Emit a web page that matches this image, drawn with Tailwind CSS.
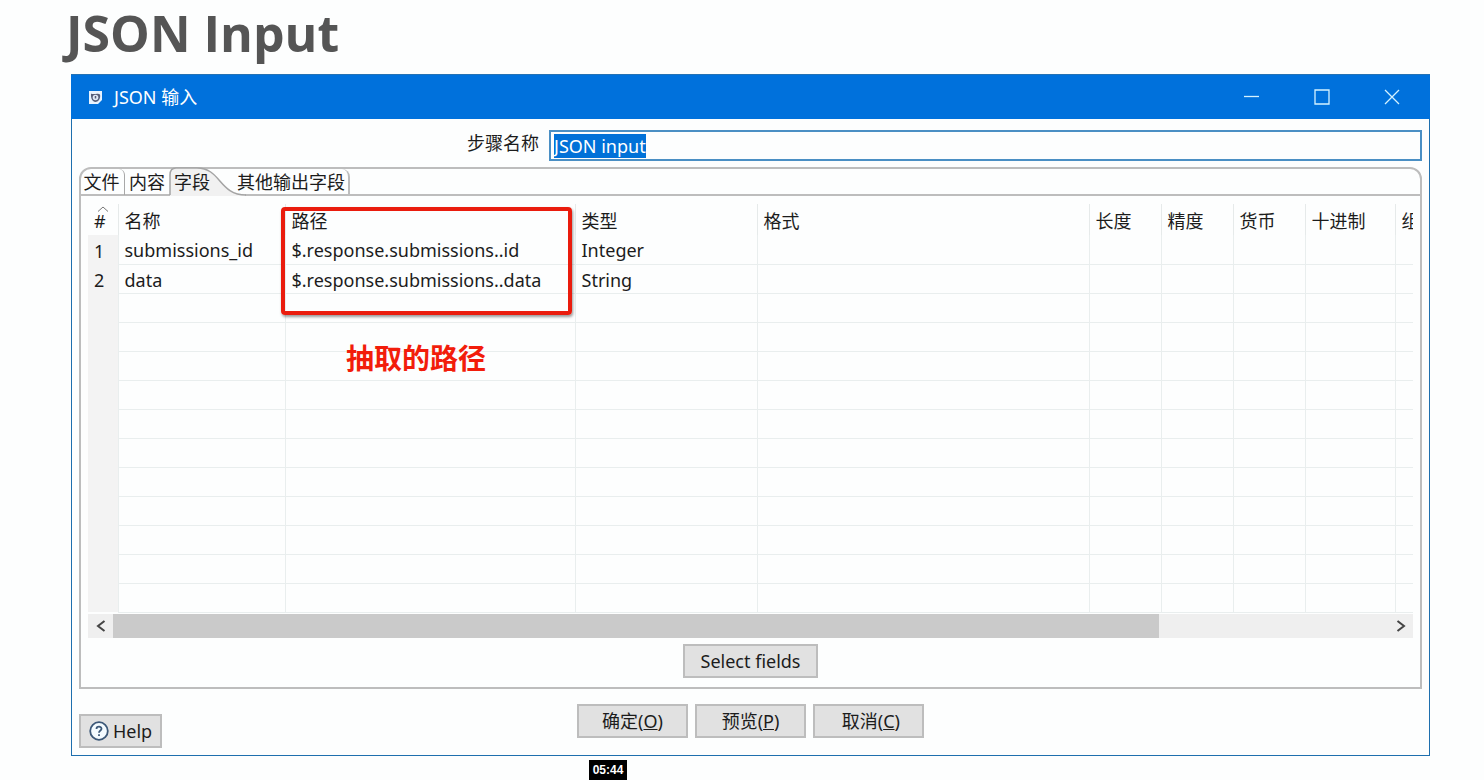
<!DOCTYPE html>
<html lang="zh-CN">
<head>
    <meta charset="UTF-8">
    <meta name="viewport" content="width=device-width, initial-scale=1.0">
    <title>JSON Input</title>
    <script src="https://cdn.jsdelivr.net/npm/@tailwindcss/browser@4"></script>
</head>
<body class="relative min-h-screen bg-[#fdfefe] font-['Noto_Sans','Noto_Sans_CJK_SC',sans-serif] text-[18px] leading-6 text-[#1c1c1c]">

    <h1 class="pl-[66px] pt-[3px] h-[74px] font-['Open_Sans',sans-serif] text-[50px] leading-[60px] font-bold text-[#555]">JSON Input</h1>

    <!-- Janela -->
    <main class="ml-[71px] mr-[54px] border border-[#1e6fae] bg-[#fdfefe]">

        <!-- Barra de título -->
        <header class="-mx-px -mt-px h-[45px] pl-[18px] pr-[30px] bg-[#0071dc] border-t border-[#2472b4] flex items-center text-white">
            <svg class="w-[13px] h-[13px]" viewBox="0 0 13 13">
                <path d="M0 0H13V9L9 13H0Z" fill="#e8f3ff"/>
                <path d="M2 2.500C4 4 9 1.500 11 3.500C12 8 9 11 6.500 11C3.500 11 1.500 7 2 2.500Z" fill="#565d78"/>
                <circle cx="6.500" cy="6.500" r="2.800" fill="#dfe9f7"/>
                <path d="M6.500 5V7.500" stroke="#565d78" stroke-width="1.500"/>
            </svg>
            <h2 class="ml-3">JSON 输入</h2>
            <div class="ml-auto flex gap-[54px]">
                <button aria-label="最小化"><svg class="w-4 h-4" viewBox="0 0 16 16" stroke="#d4f2ff" stroke-width="1.300"><path d="M0 7.500H15"/></svg></button>
                <button aria-label="最大化"><svg class="w-4 h-4" viewBox="0 0 16 16" fill="none" stroke="#d4f2ff" stroke-width="1.300"><path d="M1 1H15V15H1Z"/></svg></button>
                <button aria-label="关闭"><svg class="w-4 h-4" viewBox="0 0 16 16" stroke="#d4f2ff" stroke-width="1.300"><path d="M1 1L15 15M15 1L1 15"/></svg></button>
            </div>
        </header>

        <div class="px-[7px] pt-[11px] pb-[7px]">
            <!-- Nome da etapa -->
            <div class="flex">
                <label for="step-name" class="w-[470px] pr-[10px] pt-px text-right">步骤名称</label>
                <input id="step-name" type="text" value="JSON input" class="flex-1 min-w-0 h-[31px] px-[3px] border-2 border-[#4a8fc4] bg-[#fdfefe] outline-none selection:bg-[#0071d8] selection:text-white">
            </div>

            <!-- Painel com abas -->
            <section class="mt-1.5 border-2 border-[#bdbdbd] rounded-t-xl">
                <nav class="h-[27px] border-b-2 border-[#bdbdbd] flex">
                    <button class="w-[44px] h-[26px] pr-0.5 border-r border-[#a8a8a8] rounded-tr-md">文件</button>
                    <button class="w-[46px] h-[26px] pr-0.5">内容</button>
                    <button class="relative w-[62px] h-[26px] pl-[3px] text-left">
                        <svg class="absolute -left-0.5 -top-0.5 w-[78px] h-[29px]" viewBox="0 0 78 29">
                            <path d="M1 29V8Q1 1 7 1H28C52 1 50 27 76 27V29Z" fill="#f1f1f1"/>
                            <path d="M1 28V8Q1 1 7 1H28C52 1 50 28 77 28" fill="none" stroke="#a4a4a4" stroke-width="1.500"/>
                        </svg>
                        <span class="relative">字段</span>
                    </button>
                    <button class="w-[117px] h-[26px] pr-[3px] text-right border-r-2 border-[#bdbdbd] rounded-tr-lg">其他输出字段</button>
                </nav>

                <div class="relative mx-[7px] mt-2">
                    <div class="overflow-hidden">
                        <table class="w-full table-fixed border-collapse text-left whitespace-nowrap">
                            <colgroup>
                                <col class="w-[30px]"><col class="w-[167px]"><col class="w-[290px]"><col class="w-[182px]"><col>
                                <col class="w-[72px]"><col class="w-[72px]"><col class="w-[72px]"><col class="w-[90px]"><col class="w-[18px]">
                            </colgroup>
                            <thead>
                                <tr class="h-[31px] *:p-0 *:pt-0.5 *:pl-1.5 *:font-normal *:border-r *:border-[#e6eaea]">
                                    <th class="relative">
                                        <svg class="absolute left-[9px] top-[2px] w-3 h-1.5" viewBox="0 0 12 6" fill="none" stroke="#777"><path d="M1 5.500L6 1L11 5.500"/></svg>#
                                    </th>
                                    <th>名称</th><th>路径</th><th>类型</th><th>格式</th><th>长度</th><th>精度</th><th>货币</th><th>十进制</th>
                                    <th class="overflow-hidden border-r-0!">组</th>
                                </tr>
                            </thead>
                            <tbody id="rows" class="[&_tr]:h-[29px] [&_td]:p-0 [&_td]:pt-0.5 [&_td]:pl-1.5 [&_td]:border-r [&_td]:border-b [&_td]:border-[#e9eeee] [&_td:first-child]:bg-[#f3f3f3] [&_td:first-child]:border-b-0 [&_td:last-child]:border-r-0">
                                <tr><td>1</td><td>submissions_id</td><td>$.response.submissions..id</td><td>Integer</td><td></td><td></td><td></td><td></td><td></td><td></td></tr>
                                <tr><td>2</td><td>data</td><td>$.response.submissions..data</td><td>String</td><td></td><td></td><td></td><td></td><td></td><td></td></tr>
                            </tbody>
                        </table>
                    </div>

                    <!-- Barra de rolagem -->
                    <div class="h-6 mt-px bg-[#efefef] flex">
                        <button aria-label="向左" class="w-[25px] flex items-center justify-center"><svg class="w-2.5 h-3" viewBox="0 0 10 12" fill="none" stroke="#444" stroke-width="2"><path d="M8.500 1L2 6L8.500 11"/></svg></button>
                        <div class="flex-1"><div class="h-full w-[82%] bg-[#cacaca]"></div></div>
                        <button aria-label="向右" class="w-[25px] flex items-center justify-center"><svg class="w-2.5 h-3" viewBox="0 0 10 12" fill="none" stroke="#444" stroke-width="2"><path d="M1.500 1L8 6L1.500 11"/></svg></button>
                    </div>

                    <!-- Destaque do caminho -->
                    <div class="absolute left-[193px] top-[3px] w-[291px] h-[108px] border-4 border-[#ea1c0d] rounded-sm shadow-[1px_2px_3px_rgba(0,0,0,0.4)] pointer-events-none"></div>
                    <p class="absolute left-[258px] top-[134px] text-[28px] leading-10 font-bold text-[#f21d0b]">抽取的路径</p>
                </div>

                <div class="pt-1.5 pb-[9px] flex justify-center">
                    <button class="w-[135px] h-[34px] border-2 border-[#bdbdbd] bg-[#e1e1e1]">Select fields</button>
                </div>
            </section>

            <!-- Botões -->
            <footer class="mt-[15px] h-11 grid grid-cols-[1fr_auto_1fr]">
                <button class="self-end justify-self-start w-[83px] h-[34px] border-2 border-[#bdbdbd] bg-[#e1e1e1] flex items-center justify-center gap-1">
                    <svg class="w-5 h-5" viewBox="0 0 20 20" fill="none" stroke="#3c5878" stroke-width="1.800">
                        <circle cx="10" cy="10" r="8.800" fill="#f4fbff"/>
                        <path d="M7.500 8C7.500 5 12.500 5 12.500 7.800C12.500 9.500 10 9.500 10 11.800M10 13.200V15"/>
                    </svg>
                    Help
                </button>
                <div class="flex gap-[7px] *:w-[111px] *:h-[34px] *:border-2 *:border-[#bdbdbd] *:bg-[#e1e1e1]">
                    <button>确定(<u>O</u>)</button>
                    <button>预览(<u>P</u>)</button>
                    <button>&nbsp;取消(<u>C</u>)</button>
                </div>
            </footer>
        </div>
    </main>

    <time class="absolute left-[589px] bottom-0 w-[38px] h-5 bg-black text-center font-['Liberation_Sans',sans-serif] text-xs leading-5 font-bold text-white">05:44</time>

    <script>
        // linhas vazias da grade
        const rows = document.getElementById('rows');
        for (let i = 0; i < 11; i++) {
            rows.insertAdjacentHTML('beforeend', '<tr>' + '<td></td>'.repeat(10) + '</tr>');
        }
        const stepName = document.getElementById('step-name');
        stepName.focus();
        stepName.select();
    </script>
</body>
</html>
